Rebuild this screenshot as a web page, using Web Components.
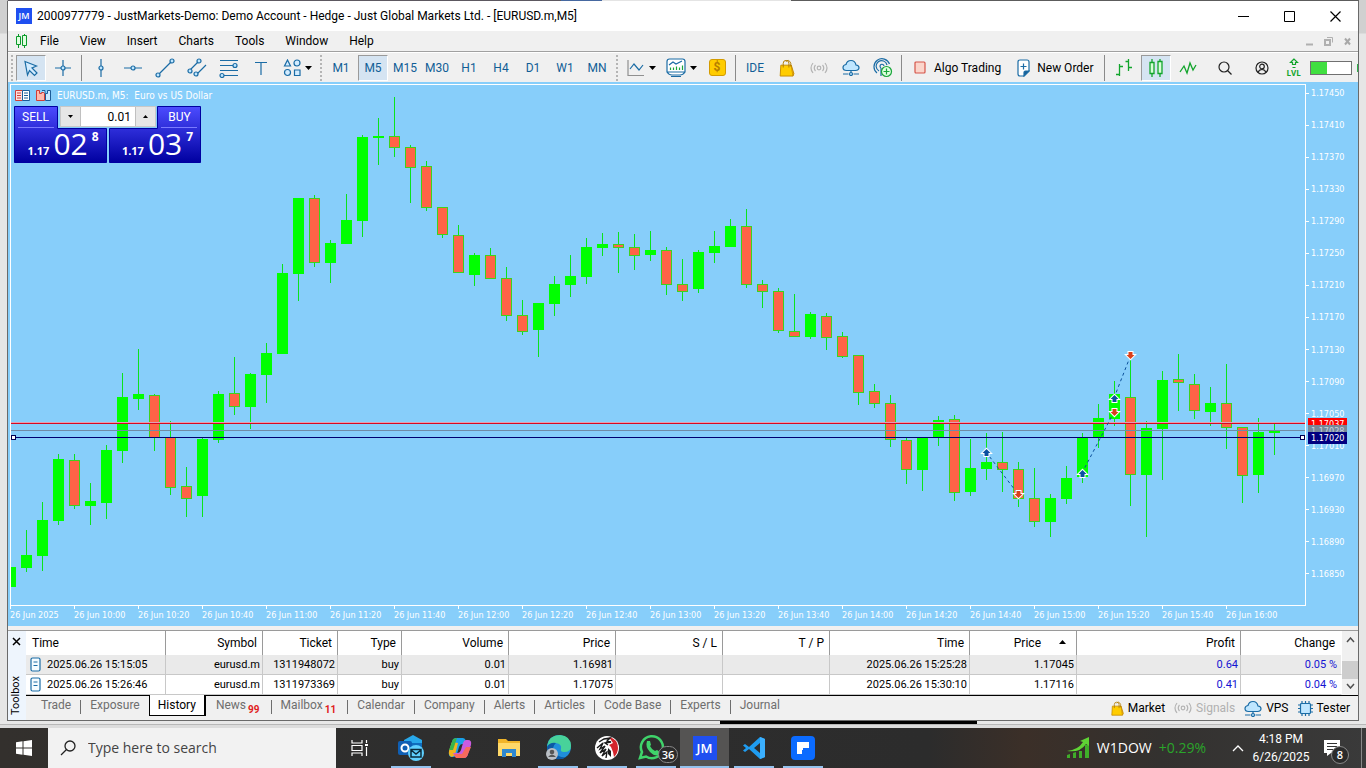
<!DOCTYPE html>
<html lang="en">
<head>
<meta charset="utf-8">
<title>Trading terminal</title>
<style>
  html, body { margin: 0; height: 100%; }
  body {
    display: flex; flex-direction: column; overflow: hidden;
    background: linear-gradient(#d0d0d0 33px, #e6e6e6 34px);
    font: 12px/16px Roboto, "Noto Sans", sans-serif;
    color: #000;
  }
</style>
</head>
<body>
<app-window>
  <title-bar slot="title" label="2000977779 - JustMarkets-Demo: Demo Account - Hedge - Just Global Markets Ltd. - [EURUSD.m,M5]"></title-bar>
  <menu-bar slot="menu"></menu-bar>
  <tool-bar slot="tools"></tool-bar>
  <price-chart slot="chart"><trade-panel></trade-panel></price-chart>
  <tool-box slot="toolbox"></tool-box>
</app-window>
<desktop-edge></desktop-edge>
<task-bar></task-bar>

<script>
const BASE = `
  :host, *, *::before, *::after { box-sizing: border-box; }
  button { font: inherit; color: inherit; background: none; border: 0; padding: 0; margin: 0; display: flex; align-items: center; justify-content: center; }
  a { color: inherit; text-decoration: none; }
  svg { display: block; flex: none; }
  input { font: inherit; margin: 0; border: 0; border-radius: 0; outline: 0; }
`;
function define(name, css, html) {
  customElements.define(name, class extends HTMLElement {
    constructor() {
      super();
      this.attachShadow({ mode: 'open' });
    }
    connectedCallback() {
      this.shadowRoot.innerHTML = `<style>${BASE}${css}</style>` + (typeof html === 'function' ? html(this) : html);
    }
  });
}
const svg = (w, h, body, attrs = '') =>
  `<svg width="${w}" height="${h}" viewBox="0 0 ${w} ${h}" fill="none" ${attrs} aria-hidden="true">${body}</svg>`;
const BLUE = 'stroke="#1b6ca5" stroke-width="1.2"';
const node = (x, y) => `<circle cx="${x}" cy="${y}" r="2" fill="#bfe6ff"/>`;

const bag = (w) => `<svg width="${w}" height="${w + 2}" viewBox="0 0 16 19" fill="none" aria-hidden="true"><path d="M1.500 6.500h11l1.800 11.500H.8z" fill="#fc0" stroke="#c58b00"/><path d="M12.500 6.500l2.800 9-1 2.500" fill="#e9a800" stroke="#c58b00"/><path d="M4 9V4.500q0-3 3-3t3 3V9M7 3q1-2 2.500-1.500t2.500 3V8" stroke="#b07a00"/></svg>`;
const cloud = svg(18, 17, `<path d="M4.500 11.500Q1 11.500 1 8.500q0-2.500 3-3Q5 1.500 9 1.500t5 4.500q3 .3 3 2.800t-3.500 2.700z" fill="#bfe6ff"/><path d="M9 11.500v2M1 15h5.500M11.500 15H17"/><circle cx="9" cy="15" r="1.500" fill="#bfe6ff"/>`, BLUE);
const signal = svg(18, 14, `<circle cx="9" cy="7" r="1.800"/><path d="M5.500 4q-2.500 3 0 6M12.500 4q2.500 3 0 6M3 2q-4 5 0 10M15 2q4 5 0 10"/>`, 'stroke="#b4b4b4" stroke-width="1.2"');
const jm = (s, f) => `<span class="jm" style="width:${s}px;height:${s}px;font-size:${f}px">JM</span>`;
const JM_CSS = `.jm { display: flex; align-items: center; justify-content: center; background: #1f4ff0; color: #fff; font-family: "Open Sans", sans-serif; font-weight: 600; flex: none; }`;

/* ---------- window frame ---------- */
define('app-window', `
  :host { display: flex; flex-direction: column; flex: 1; min-height: 0; margin: 0 7px; border: 1px solid #6a6a6a; border-top-color: transparent;
    background: linear-gradient(90deg, #5c5860 41%, #4668a0 41% 44%, #e4e4e4 44% 58%, #5c5c5c 58%) 0 0 / 100% 1px no-repeat border-box, #f0f0f0; }
  .chart { display: flex; flex: 1; min-height: 0; }
  ::slotted(price-chart) { flex: 1; }
`, `
  <slot name="title"></slot><slot name="menu"></slot><slot name="tools"></slot>
  <div class="chart"><slot name="chart"></slot></div>
  <slot name="toolbox"></slot>
`);

/* strip of the windows behind, between the terminal and the taskbar */
define('desktop-edge', `
  :host { display: flex; height: 7px; padding: 0 8px; background: linear-gradient(#e8e8e8 3px, #b8b8b8 3px 4px, #dcdcdc 4px); }
  i { height: 3px; }
  .a { flex: 712; }
  .b { flex: 257; background: #000; }
  .c { flex: 381; }
`, `<i class="a"></i><i class="b"></i><i class="c"></i>`);

define('title-bar', JM_CSS + `
  :host { display: flex; align-items: center; height: 30px; background: #fff; padding-left: 8px; gap: 5px; }
  h1 { flex: 1; font: inherit; margin: 0; white-space: nowrap; }
  button { width: 46px; height: 30px; }
  nav { display: flex; }
`, (el) => `
  ${jm(16, 9)}<h1>${el.getAttribute('label')}</h1>
  <nav>
    <button aria-label="Minimize">${svg(11, 11, '<path d="M0 5.500h11"/>', 'stroke="#000"')}</button>
    <button aria-label="Maximize">${svg(11, 11, '<path d="M.5.500h10v10H.5z"/>', 'stroke="#000"')}</button>
    <button aria-label="Close">${svg(11, 11, '<path d="M.5.500l10 10M10.500.500l-10 10"/>', 'stroke="#000" stroke-width="1.200"')}</button>
  </nav>
`);

define('menu-bar', `
  :host { display: flex; align-items: center; height: 21px; border-bottom: 1px solid #a0a0a0; padding-left: 7px; }
  nav { display: flex; flex: 1; margin-left: 1px; }
  nav button { padding: 0 11px 0 10px; }
  nav button:first-child { padding-left: 11px; }
  .mdi { display: flex; gap: 10px; padding-right: 6px; }
`, `
  ${svg(13, 14, '<path d="M3.500 0v2M3.500 11v3M9.500 0v1M9.500 12v2"/><path d="M1.500 2.500h4v8h-4zM7.500 1.500h4v10h-4z" fill="#e0ffe0"/>', 'stroke="#0a9a2a"')}
  <nav>${['File', 'View', 'Insert', 'Charts', 'Tools', 'Window', 'Help'].map(t => `<button>${t}</button>`).join('')}</nav>
  <div class="mdi">
    <button aria-label="Minimize chart">${svg(9, 9, '<path d="M1 7.500h7"/>', 'stroke="#b0b0b0" stroke-width="2"')}</button>
    <button aria-label="Restore chart">${svg(9, 9, '<path d="M1 3h5v5H1z" stroke-width="2"/><path d="M3 .5h5.500v5"/>', 'stroke="#b0b0b0"')}</button>
    <button aria-label="Close chart">${svg(9, 9, '<path d="M2 1.500l5 6M7 1.500l-5 6"/>', 'stroke="#a8a8a8" stroke-width="2"')}</button>
  </div>
`);

/* ---------- toolbar ---------- */
const caret = svg(7, 4, '<path d="M0 0h7L3.500 4z" fill="#000"/>');
const tb = {
  cursor: svg(18, 18, '<path d="M3 2.500l11.500 4.500-4.500 2 5 5-2.500 2.500-5-5-2 4.500z" fill="#d3ecff"/>', BLUE),
  cross: svg(18, 18, `<path d="M9 1v6M9 11v6M1 9h6M11 9h6"/>${node(9, 9)}`, BLUE),
  vline: svg(18, 20, `<path d="M9 1v7M9 12v7"/>${node(9, 10)}`, BLUE),
  hline: svg(20, 18, `<path d="M1 9h7M12 9h7"/>${node(10, 9)}`, BLUE),
  trend: svg(20, 20, `<path d="M4 16L16 4"/>${node(3, 17)}${node(17, 3)}`, BLUE),
  channel: svg(20, 20, `<path d="M3 12l8-8M9 17L19 7"/>${node(3, 13)}${node(12, 3)}${node(9, 16)}`, BLUE),
  fibo: svg(20, 20, `<path d="M1 2.500h18M1 7.500h13M1 12.500h18M5 17.500h14"/>${node(16, 7.5)}${node(3, 17.5)}`, BLUE),
  text: svg(16, 16, '<path d="M2 2.500h12M8 2.500V15"/>', BLUE),
  shapes: svg(18, 18, '<g fill="#d3ecff"><path d="M4.500 1l3 6h-6z"/><circle cx="14" cy="4" r="3"/><circle cx="4.500" cy="13.500" r="3"/><path d="M11.500 11h5.500v5.500h-5.500z"/></g>', BLUE),
  line: svg(18, 18, '<path d="M1 1v15.500h16" stroke="#909090"/><path d="M3 10l4-5 5 6 4-5"/>', BLUE),
  template: svg(20, 20, '<path d="M1 3.500Q1 1 3.500 1h13Q19 1 19 3.500V14H1zM1 14q2 3 5 3h8q3 0 5-3M5 18.500h10" fill="#fff"/><path d="M3 7l4-3 3 2 6-3"/><path d="M4.500 12V9.500M7.500 12V9.500M10.500 12V8.500M13.500 12V9.500M16.500 12V7.500" stroke="#1aa53a"/>', BLUE),
  dollar: `<span class="dollar">$</span>`,
  copy: svg(20, 20, '<path d="M4 15A8 8 0 1 1 16.500 6M6 13A5.500 5.500 0 1 1 14 7M8 10A2 2 0 1 1 11 8M8 10v8"/><circle cx="13.500" cy="13.500" r="5" fill="#dfffe0" stroke="#18a53a"/><path d="M13.500 10.500v6M10.500 13.500h6" stroke="#18a53a"/>', BLUE),
  algo: svg(13, 13, '<rect x="1" y="1" width="10" height="11" rx="1" fill="#fbd5cb" stroke="#d5554a" stroke-width="1.200"/>'),
  order: svg(13, 18, '<path d="M1 3q0-2 2-2h7q2 0 2 2v9l-5 5H3q-2 0-2-2z" fill="#fff"/><path d="M12 12l-5 5v-3.500q0-1.500 1.500-1.500z" fill="#1b5f95"/><path d="M6.500 4.500v6M3.500 7.500h6"/>', BLUE),
  bars: svg(18, 20, '<path d="M4.500 6v12M1 16.500h3.500M4.500 8.500H8M13.500 1v12M10.500 3.500h3M13.500 9.500H17"/>', 'stroke="#12a52c" stroke-width="1.300"'),
  candles: svg(16, 18, '<path d="M4 0v3M4 15v3M12 0v2M12 15v3"/><path d="M2 3.500h4v11H2zM10 2.500h4v12h-4z" fill="#d8ffd8"/>', 'stroke="#12a52c" stroke-width="1.300"'),
  zig: svg(18, 16, '<path d="M1 12l4-6 3 7 3-10 3 7 3-5"/>', 'stroke="#12a52c" stroke-width="1.300"'),
  search: svg(16, 16, '<circle cx="7" cy="7" r="5"/><path d="M10.500 10.500l4 4"/>', 'stroke="#222" stroke-width="1.200"'),
  user: svg(14, 14, '<circle cx="7" cy="7" r="6"/><circle cx="7" cy="5.500" r="2.300"/><path d="M3 11.500q1-3 4-3t4 3"/>', 'stroke="#222" stroke-width="1.200"'),
  up: svg(10, 11, '<path d="M5 1L1.500 4.500h2v2h3v-2h2zM3.500 9.500h3"/>', 'stroke="#12a52c" stroke-width="1.200"'),
};
const btn = (icon, label, cls = '') => `<button class="${cls}" aria-label="${label}">${icon}</button>`;
define('tool-bar', `
  :host { display: flex; height: 30px; align-items: center; border-top: 1px solid #fff; color: #115e96; white-space: nowrap; overflow: hidden; }
  button { width: 32px; height: 26px; flex: none; }
  button.on { width: 30px; margin: 0 1px; background: #d5e4f2; border: 1px solid #fff; border-top-color: #9a9a9a; border-left-color: #9a9a9a; }
  button.drop { width: 40px; gap: 4px; }
  .grip { width: 2px; height: 26px; margin: 0 3px; flex: none; background: repeating-linear-gradient(#b5b5b5 0 2px, transparent 2px 4px); }
  .grip:first-of-type { margin-right: 2px; }
  .sep { width: 1px; height: 26px; margin: 0 3px 0 2px; flex: none; background: #8a8a8a; }
  .wide { width: auto; gap: 7px; padding: 0 9px; color: #000; }
  .wide.order { padding: 0 8px 0 7px; }
  .dollar { width: 17px; height: 17px; border-radius: 3px; border: 1px solid #d39b00; background: #fc0; color: #b57d00; font-weight: 700; line-height: 15px; }
  .gap { width: 5px; flex: none; }
  .level { flex-direction: column; color: #12a52c; font: 700 8px/8px "Open Sans", sans-serif; }
  .load { width: 42px; height: 14px; flex: none; border: 1px solid #707070; background: linear-gradient(90deg, #40df40 40%, #fff 40%); }
  .more { width: 2px; height: 8px; margin-left: 5px; flex: none; background: #2fb14a; }
`, `
  <span class="grip"></span>
  ${btn(tb.cursor, 'Cursor', 'on')}${btn(tb.cross, 'Crosshair')}<span class="sep"></span>
  ${btn(tb.vline, 'Vertical line')}${btn(tb.hline, 'Horizontal line')}${btn(tb.trend, 'Trend line')}${btn(tb.channel, 'Channel')}${btn(tb.fibo, 'Fibonacci')}${btn(tb.text, 'Text')}${btn(tb.shapes + caret, 'Shapes', 'drop')}
  <span class="grip"></span>
  ${['M1', 'M5', 'M15', 'M30', 'H1', 'H4', 'D1', 'W1', 'MN'].map(t => `<button class="${t === 'M5' ? 'on' : ''}">${t}</button>`).join('')}
  <span class="grip"></span>
  ${btn(tb.line + caret, 'Chart type', 'drop')}${btn(tb.template + caret, 'Templates', 'drop')}${btn(tb.dollar, 'Quotes')}<span class="sep"></span>
  <button>IDE</button>${btn(bag(16), 'Market')}${btn(signal, 'Signals')}${btn(cloud, 'VPS')}${btn(tb.copy, 'Copy trading')}<span class="sep"></span>
  <button class="wide">${tb.algo}Algo Trading</button><button class="wide order">${tb.order}New Order</button><span class="sep"></span>
  ${btn(tb.bars, 'Bars')}${btn(tb.candles, 'Candles', 'on')}${btn(tb.zig, 'Line')}<span class="gap"></span>
  ${btn(tb.search, 'Search')}<span class="gap"></span>${btn(tb.user, 'Account')}
  <button class="level">${tb.up}<span>LVL</span></button>
  <div class="load" role="img" aria-label="Connection level"></div><span class="more"></span>
`);

/* ---------- chart ---------- */
/* one candle per 16px slot: direction, high, body top, body bottom, low */
const CANDLES = `
g567,567,587,587 g530,555,568,572 g502,520,556,571 g454,459,521,525 r454,460,506,509 g483,501,506,525 g445,450,503,519 g373,397,451,463
g349,394,399,410 r394,395,438,451 r421,437,488,495 r467,486,499,517 g437,439,496,517 g391,394,440,443 r357,393,407,415 g373,374,407,429
g343,353,375,403 g264,273,354,354 g198,198,274,301 r195,198,263,267 g240,243,263,283 g194,220,244,244 g135,137,221,237 g118,136,138,165
r97,136,148,157 r145,147,168,203 r161,166,208,211 r207,207,235,238 r225,235,273,273 g253,255,275,286 r248,255,279,279 r267,278,316,321
r300,315,332,335 g303,303,330,357 g276,284,304,316 g255,276,285,297 g238,247,277,284 g233,244,248,256 r232,244,248,273 r234,247,256,270
g231,250,255,261 r247,250,285,295 r259,284,292,301 g250,252,289,293 g231,246,253,263 g219,226,247,247 r209,226,285,288 r280,284,292,308
r288,291,331,333 r294,331,337,337 g312,314,337,339 r313,316,338,350 r332,336,357,358 r355,355,393,405 r384,391,404,408 r395,403,440,447
r438,440,470,484 g438,438,470,491 g416,420,437,446 r415,419,493,501 g439,468,492,496 g433,462,469,480 r432,462,470,492 r462,469,499,507
r468,498,522,527 g494,498,522,537 g466,478,499,504 g433,438,477,483 g404,418,437,448 g381,394,419,426 r360,397,475,506 g421,428,475,537
g371,380,429,480 r354,379,383,411 r374,384,411,419 g387,403,412,426 r364,403,428,449 r427,427,476,503 g418,432,475,493 g422,430,433,455`
  .trim().split(/\s+/).map(s => [s[0], ...s.slice(1).split(',').map(Number)]);

const candleShapes = CANDLES.map(([dir, high, top, bottom, low], i) => {
  const x = 10 + i * 16;
  const wick = `<rect x="${x}" y="${high}" width="1" height="${low - high}" fill="#0be31b"/>`;
  const body = dir === 'g'
    ? `<rect x="${x - 5}" y="${top}" width="11" height="${bottom - top}" fill="#0f0"/>`
    : `<rect x="${x - 5}" y="${top}" width="11" height="${bottom - top}" fill="#3fd21c"/><rect x="${x - 4}" y="${top + 1}" width="9" height="${bottom - top - 2}" fill="#ff6347"/>`;
  return wick + body;
}).join('');
const arrow = (x, y, up) => `<path transform="translate(${x}.5 ${y}.5)${up ? '' : ' scale(1 -1)'}" d="M0-3.500L4 0.500H2v3h-4v-3h-2z" fill="${up ? '#0b50a0' : '#d8401c'}" stroke="#fff" stroke-width="2" paint-order="stroke"/>`;
const prices = Array.from({ length: 16 }, (_, i) => (1.1745 - i * 0.0004).toFixed(5));
const times = ['2025', '10:00', '10:20', '10:40', '11:00', '11:20', '11:40', '12:00', '12:20', '12:40', '13:00', '13:20', '13:40', '14:00', '14:20', '14:40', '15:00', '15:20', '15:40', '16:00'];

define('price-chart', `
  :host { display: grid; grid-template-columns: 1fr 52px; grid-template-rows: 1fr 20px; padding: 2px 0 0 2px; background: #87cefa; color: #fff; font: 9px/10px "DejaVu Sans Condensed", "DejaVu Sans", sans-serif; position: relative; overflow: hidden; min-width: 0; }
  .plot { border: 1px solid #fff; overflow: hidden; min-width: 0; min-height: 0; }
  .plot svg { width: 100%; height: 100%; }
  .prices { position: relative; display: flex; flex-direction: column; justify-content: space-between; padding: 4px 0 27px; }
  .prices span { display: flex; align-items: center; gap: 2px; }
  .prices span::before { content: ""; width: 3px; height: 1px; background: #fff; }
  .prices b { position: absolute; left: 2px; width: 39px; height: 12px; padding-left: 3px; font-weight: 400; line-height: 12px; overflow: hidden; }
  .ask { top: 334px; background: #f00; }
  .last { top: 341px; background: #778899; color: #c5d4e2; }
  .level { top: 348px; background: #000080; }
  .times { display: flex; }
  .times span { width: 64px; flex: none; padding-top: 4px; white-space: nowrap; background: linear-gradient(#fff, #fff) 0 0 / 1px 3px no-repeat; }
  header { position: absolute; left: 7px; top: 8px; display: flex; align-items: center; gap: 6px; white-space: pre; font-size: 10px; }
  ::slotted(trade-panel) { position: absolute; left: 6px; top: 24px; }
`, `
  <div class="plot"><svg role="img" aria-label="EURUSD five minute candles"><g transform="translate(-11 -85)" shape-rendering="crispEdges">
    ${candleShapes}
    <rect x="11" y="422" width="1294" height="1" fill="#e0a0b4"/>
    <rect x="11" y="423" width="1294" height="1" fill="#d80820"/>
    <rect x="11" y="430" width="1294" height="1" fill="#708ba5"/>
    <rect x="11" y="437" width="1294" height="1" fill="#000070"/>
    <g fill="#fff" stroke="#000050"><path d="M11.500 435.500h4v4h-4zM1300.500 435.500h4v4h-4z"/></g>
    <g stroke="#0b509a" stroke-dasharray="3 3" fill="none" shape-rendering="auto"><path d="M986 452L1018 494M1082 473L1114 412M1114 398L1130 357"/></g>
    <g shape-rendering="auto">${arrow(986, 452, 1)}${arrow(1018, 494)}${arrow(1082, 473, 1)}${arrow(1114, 398, 1)}${arrow(1114, 412)}${arrow(1130, 355)}</g>
  </g></svg></div>
  <div class="prices">${prices.map(p => `<span>${p}</span>`).join('')}<b class="ask">1.17037</b><b class="last">1.17028</b><b class="level">1.17020</b></div>
  <div class="times">${times.map(t => `<span>26 Jun ${t}</span>`).join('')}</div>
  <header>
    ${svg(15, 11, '<path d="M.5.500h7v10h-7z" fill="#ffe0dc" stroke="#d03c36"/><path d="M7.500.500h7v10h-7z" fill="#fff" stroke="#1c5c98"/><path d="M2 3h4M2 5.500h4M2 8h4" stroke="#d03c36"/><path d="M9 3h4M9 5.500h4M9 8h4" stroke="#1c5c98"/>')}
    ${svg(15, 11, '<path d="M.5.500h3v3h2v-1h3v8h-8z" fill="#ffb8ac" stroke="#d03c36"/><path d="M14.500.500h-3v3h-2v7h5zM6 .5h3v3" fill="#cbe8ff" stroke="#1c5c98"/>')}
    <span>EURUSD.m, M5:  Euro vs US Dollar</span>
  </header>
  <slot></slot>
`);

define('trade-panel', `
  :host { display: grid; grid-template-columns: 93px 92px; gap: 2px; height: 57px; color: #fff; font: 12px/16px Roboto, "Noto Sans", sans-serif; }
  .side { position: relative; display: grid; grid-template-rows: 22px 35px; justify-content: stretch; height: 57px; }
  .side > svg { position: absolute; inset: 0; }
  .side > span { position: relative; }
  .name { width: 43px; line-height: 22px; }
  .buy .name { justify-self: end; }
  .quote { display: flex; align-items: baseline; justify-content: center; gap: 4px; padding: 2px 0 0 5px; font: 700 11px/35px "Open Sans", sans-serif; }
  .quote i { font: 30px/35px "Open Sans", sans-serif; }
  .quote sup { align-self: flex-start; line-height: 22px; vertical-align: top; font-size: 12px; }
  form { position: absolute; left: 46px; top: 0; display: flex; width: 96px; height: 21px; border: 1px solid #c8c8c8; background: #e6e6e6; }
  form button { width: 19px; }
  input { flex: 1; min-width: 0; padding: 0 4px; text-align: right; background: #fff; color: #000; border: 1px solid #c0c0c0; border-width: 0 1px; }
`, () => {
  const shape = (d, u) => svg(93, 57, `<defs><linearGradient id="g" x1="0" y1="0" x2="0" y2="1"><stop stop-color="#4c4cff"/><stop offset="1" stop-color="#0000a0"/></linearGradient></defs><path d="${d}" fill="url(#g)" stroke="#0000a0"/><path d="${u}" stroke="#7a7aff"/>`);
  return `
  <button class="side sell">${shape('M.5.500h43v22h49v34H.5z', 'M4 21.500h36')}<span class="name">SELL</span><span class="quote">1.17<i>02</i><sup>8</sup></span></button>
  <button class="side buy">${shape('M91.500.500h-43v22H.5v34h91z', 'M52 21.500h36')}<span class="name">BUY</span><span class="quote">1.17<i>03</i><sup>7</sup></span></button>
  <form><button type="button" aria-label="Decrease volume">${svg(5, 3, '<path d="M0 0h5L2.500 3z" fill="#000"/>')}</button><input aria-label="Volume" value="0.01"><button type="button" aria-label="Increase volume">${svg(5, 3, '<path d="M0 3h5L2.500 0z" fill="#000"/>')}</button></form>`;
});

/* ---------- toolbox ---------- */
const doc = svg(11, 15, '<rect x="1" y="1" width="9" height="13" rx="1.500" fill="#f4fbff"/><path d="M3.500 5h4M3.500 8.500h4"/>', BLUE);
const chip = svg(15, 15, '<path d="M4 0v15M7.500 0v15M11 0v15M0 4h15M0 7.500h15M0 11h15"/><rect x="2.500" y="2.500" width="10" height="10" rx="1" fill="#bfe6ff"/>', BLUE);
const rows = [
  ['2025.06.26 15:15:05', 'eurusd.m', '1311948072', 'buy', '0.01', '1.16981', '', '', '2025.06.26 15:25:28', '1.17045', '0.64', '0.05 %'],
  ['2025.06.26 15:26:46', 'eurusd.m', '1311973369', 'buy', '0.01', '1.17075', '', '', '2025.06.26 15:30:10', '1.17116', '0.41', '0.04 %'],
];
const heads = [['Time', 140], ['Symbol', 97], ['Ticket', 75], ['Type', 64], ['Volume', 107], ['Price', 107], ['S / L', 107], ['T / P', 107], ['Time', 140], ['Price', 107], ['Profit', 164], ['Change', 101]];
const tabs = ['Trade', 'Exposure', 'History', 'News', 'Mailbox', 'Calendar', 'Company', 'Alerts', 'Articles', 'Code Base', 'Experts', 'Journal'];
const counts = { News: 99, Mailbox: 11 };
define('tool-box', `
  :host { display: grid; grid-template-columns: 18px 1fr; margin-top: 4px; border-top: 1px solid #9a9a9a; }
  aside { display: flex; flex-direction: column; align-items: center; justify-content: space-between; background: #eef5fd; padding: 6px 2px 5px 0; }
  aside span { writing-mode: vertical-rl; transform: rotate(180deg); line-height: 14px; font-size: 11px; }
  .main { min-width: 0; }
  .list { display: flex; background: #fff; }
  table { flex: 1; min-width: 0; border-collapse: separate; border-spacing: 0; table-layout: fixed; }
  th, td { padding: 0 2px; text-align: right; white-space: nowrap; overflow: hidden; font-weight: 400; border-right: 1px solid #c8c8c8; }
  th { height: 24px; padding: 0 5px; border-right-color: #9a9a9a; }
  td { height: 20px; font-size: 11px; line-height: 19px; border-bottom: 1px solid #c8c8c8; }
  tr:nth-child(1) td { background: #eaeaea; }
  th:first-child { text-align: left; padding-left: 6px; }
  td:first-child div { display: flex; align-items: center; gap: 6px; padding-left: 2px; }
  th:last-child { border-right: 0; padding-right: 7px; }
  td:last-child { border-right-color: #fff; padding-right: 4px; }
  td:nth-child(n+11) { color: #1414d2; }
  .sorted svg { display: inline-block; margin: 0 5px 3px 18px; }
  .scroll { width: 16px; display: flex; flex-direction: column; align-items: center; justify-content: space-between; background: #f0f0f0; padding: 6px 0; }
  .scroll i { width: 16px; height: 18px; background: #cdcdcd; margin-top: 14px; }
  footer { display: flex; align-items: flex-start; height: 25px; border-top: 1px solid #000; color: #6e6e6e; padding-left: 5px; }
  nav { display: flex; flex: 1; }
  nav a { position: relative; display: flex; padding: 0 9px 0 10px; line-height: 19px; }
  nav a + a::before { content: ""; position: absolute; left: 0; top: 4px; width: 1px; height: 14px; background: #6e6e6e; }
  nav a.on { margin-top: -1px; height: 21px; background: #fff; color: #000; border: 1px solid #000; border-top: 0; border-right-width: 2px; padding: 0 8px; line-height: 21px; }
  nav a.on::before, nav a.on + a::before { display: none; }
  sub { color: #e02020; font-weight: 700; font-size: 10px; line-height: 12px; margin: 8px 0 0 2px; }
  nav a.count { padding-right: 11px; }
  .status { display: flex; gap: 9px; padding-right: 8px; height: 24px; color: #000; }
  .status a { display: flex; align-items: center; gap: 4px; }
  .status .off { color: #b0b0b0; }
`, `
  <aside><button aria-label="Close toolbox">${svg(9, 9, '<path d="M1 1l7 7M8 1L1 8"/>', 'stroke="#000" stroke-width="1.500"')}</button><span>Toolbox</span></aside>
  <div class="main">
    <div class="list">
      <table>
        <thead><tr>${heads.map(([h, w], i) => `<th style="width:${w}px" class="${i === 9 ? 'sorted' : ''}">${h}${i === 9 ? svg(7, 4, '<path d="M0 4h7L3.500 0z" fill="#000"/>') : ''}</th>`).join('')}</tr></thead>
        <tbody>${rows.map(r => `<tr>${r.map((c, i) => `<td>${i ? c : `<div>${doc}${c}</div>`}</td>`).join('')}</tr>`).join('')}</tbody>
      </table>
      <div class="scroll">${svg(9, 6, '<path d="M1 5l3.500-4L8 5"/>', 'stroke="#505050" stroke-width="1.500"')}<i></i>${svg(9, 6, '<path d="M1 1l3.500 4L8 1"/>', 'stroke="#505050" stroke-width="1.500"')}</div>
    </div>
    <footer>
      <nav>${tabs.map(t => `<a href="#" class="${t === 'History' ? 'on' : ''} ${counts[t] ? 'count' : ''}">${t}${counts[t] ? `<sub>${counts[t]}</sub>` : ''}</a>`).join('')}</nav>
      <div class="status"><a href="#">${bag(13)}Market</a><a href="#" class="off">${signal}Signals</a><a href="#">${cloud}VPS</a><a href="#">${chip}Tester</a></div>
    </footer>
  </div>
`);

/* ---------- taskbar ---------- */
const apps = {
  Outlook: svg(28, 26, '<path d="M7 5l9-5 9 5v15H7z" fill="#28a8ea"/><path d="M7 8h18v12H7z" fill="#0f6cbd"/><rect x="1" y="6" width="14" height="14" rx="2" fill="#0f5fb4"/><circle cx="8" cy="13" r="3.500" stroke="#fff" stroke-width="2"/><circle cx="19" cy="18" r="8" fill="#5fd0ff"/><path d="M14 14.500h10v7.500H14zM14 15l5 4 5-4" stroke="#0b2a3a" stroke-width="1.500"/>'),
  Copilot: svg(24, 24, '<path d="M8 2h7q2 0 3 3l1 3h-5q-2 0-3 3l-2 7q-1 3-3 3H4q-4 0-3-5l3-10q1-4 4-4z" fill="#18a0e8"/><path d="M1 15l3-9 6 1-3 12-3 2q-4-1-3-6z" fill="#f2b51c"/><path d="M5 3l4-1-4 12H1z" fill="#39b54a"/><path d="M16 22H9q-2 0-3-3l-1-2h5q2 0 3-3l2-7q1-3 3-3h2q4 0 3 5l-3 9q-1 4-4 4z" fill="#c95be0"/><path d="M16 22H9q-2 0-3-4h8l4-7h5l-3 7q-1 4-4 4z" fill="#f76a5c"/>'),
  Explorer: svg(24, 22, '<path d="M1 2h8l2 2h12v15H1z" fill="#f0b429"/><path d="M1 6h22v13H1z" fill="#ffd969"/><path d="M5 12h14v8h-4v-4H9v4H5z" fill="#2f88cf"/>'),
  Edge: svg(26, 26, '<circle cx="14" cy="12" r="12" fill="#1f8edb"/><path d="M2 11Q4 0 15 0q11 1 11 11 0 6-7 6-4 0-3-3 1-5-5-6-6 0-9 3z" fill="#48d29a"/><path d="M2 12q3-5 9-4-5 4-1 10 4 5 11 4-4 3-10 2Q2 21 2 12z" fill="#0c59a4"/><circle cx="7" cy="19" r="6" fill="#b9bec4"/><circle cx="7" cy="17" r="2.300" fill="#555"/><path d="M3 22q4-5 8 0z" fill="#555"/>'),
  Lion: svg(24, 24, '<circle cx="12" cy="12" r="12" fill="#fff"/><path d="M14 1q9 2 9 11 0 5-4 9l-1-5-2-5-2-2 4-2z" fill="#d4242b"/><path d="M4 6l5-3 6-1-3 3 4 1-6 1 3 2M2 12l6-5-3 6 5-3-5 7 6-4-4 7 5-4-1 6" stroke="#191919" stroke-width="1.400"/><path d="M13 12l3 3v6l-3-3z" fill="#191919"/>'),
  WhatsApp: svg(36, 30, '<path d="M2 25l2-6A11 11 0 1 1 8 23.500z" stroke="#3fd36a" stroke-width="2.500"/><path d="M9 8l3 0 1 4-1 1q2 4 5 5l2-1 3 2-1 3q-4 2-9-3-5-5-3-11z" fill="#3fd36a"/>') + '<em>36</em>',
  JustMarkets: jm(24, 13),
  Code: svg(24, 24, '<path d="M18 1L7 11 3 8 1 9.500 4 12l-3 2.500L3 16l4-3 11 10 5-2V3zM18 7v10l-6-5z" fill="#1f9cf0" fill-rule="evenodd"/><path d="M18 1l5 2v18l-5 2z" fill="#3bb0ff"/>'),
  Planner: svg(24, 24, '<rect width="24" height="24" rx="4" fill="#0b6bff"/><path d="M6 6h12v6h-6v2h-1v4H6z" fill="#fff"/>'),
};
const running = ['Outlook', 'Edge', 'Lion', 'WhatsApp', 'JustMarkets', 'Code', 'Planner'];
define('task-bar', JM_CSS + `
  :host { display: flex; height: 40px; background: linear-gradient(90deg, #33302d, #2e2e2e 30%, #2c2c2c 68%, #3b2f28 75%, #33312f 85%, #3a3a3a); color: #fff; }
  .start { width: 48px; }
  label { display: flex; align-items: center; flex: none; width: 288px; height: 40px; background: #f2f2f2; padding-left: 12px; gap: 12px; }
  input { flex: 1; min-width: 0; background: none; font: 14px/20px "Open Sans", sans-serif; padding: 0; }
  input::placeholder { color: #444; opacity: 1; }
  .view { width: 48px; margin-right: 2px; }
  .app { position: relative; width: 49px; height: 40px; }
  .app.run::after { content: ""; position: absolute; left: 5px; right: 4px; bottom: 0; height: 2px; background: #94c2ee; }
  .app.active { background: #555453; }
  .app.active::after { left: 0; right: 0; }
  em { position: absolute; left: 27px; top: 18px; width: 20px; height: 17px; border-radius: 9px; border: 1px solid #888; background: #2b2b2b; font: 600 11px/15px "Open Sans", sans-serif; }
  .fill { flex: 1; }
  .stock { gap: 7px; margin-right: 16px; font: 14px/20px "Open Sans", sans-serif; }
  .stock b { font-weight: 400; color: #2aa52a; }
  .tray { width: 32px; }
  time { display: flex; flex-direction: column; justify-content: center; align-items: center; line-height: 18px; width: 54px; padding-bottom: 1px; }
  .notes { position: relative; width: 48px; }
  .notes em { left: 23px; top: 18px; width: 18px; height: 18px; }
  .edge { width: 5px; border-left: 1px solid #888; margin-left: 5px; }
`, `
  <button class="start" aria-label="Start">${svg(16, 16, '<path d="M0 2.300L6.500 1.300v6.200H0zM7.500 1.200L16 0v7.500H7.500zM0 8.500h6.500v6.200L0 13.700zM7.500 8.500H16V16l-8.500-1.200z" fill="#fff"/>')}</button>
  <label>${svg(16, 16, '<circle cx="10" cy="6" r="5"/><path d="M6.500 9.500L1 15"/>', 'stroke="#222" stroke-width="1.300"')}<input placeholder="Type here to search" aria-label="Type here to search"></label>
  <button class="view" aria-label="Task view">${svg(18, 16, '<path d="M1 0v3h10V0M1 5.500h10v5H1zM1 16v-3h10v3M15.500 0v3M15.500 7v9"/><path d="M14 4h3v2h-3z" fill="#fff" stroke="none"/>', 'stroke="#fff" stroke-width="1.200"')}</button>
  ${Object.entries(apps).map(([n, i]) => `<button class="app ${running.includes(n) ? 'run' : ''} ${n === 'JustMarkets' ? 'active' : ''}" aria-label="${n}">${i}</button>`).join('')}
  <span class="fill"></span>
  <button class="stock">${svg(24, 24, '<path d="M1 22v-3l3-1v4zM7 22v-5l3-1v6zM13 22v-7h3v7zM19 22V9h4v13z" fill="#3fae29"/><path d="M1 15Q12 14 17 6l-3-1 9-4v9l-3-2Q14 17 1 15z" fill="#5fd335"/>')}<span>W1DOW</span><b>+0.29%</b></button>
  <button class="tray" aria-label="Hidden icons">${svg(12, 8, '<path d="M1 7l5-5 5 5"/>', 'stroke="#fff" stroke-width="1.300"')}</button>
  <time datetime="2025-06-26T16:18"><span>4:18 PM</span><span>6/26/2025</span></time>
  <button class="notes" aria-label="Notifications">${svg(18, 16, '<path d="M1 0h16v13H8l-4 3v-3H1z" fill="#fff"/><path d="M4 3.500h10M4 6.500h10M4 9.500h6" stroke="#333" stroke-width="1.200"/>')}<em>8</em></button>
  <span class="edge"></span>
`);
</script>
</body>
</html>
